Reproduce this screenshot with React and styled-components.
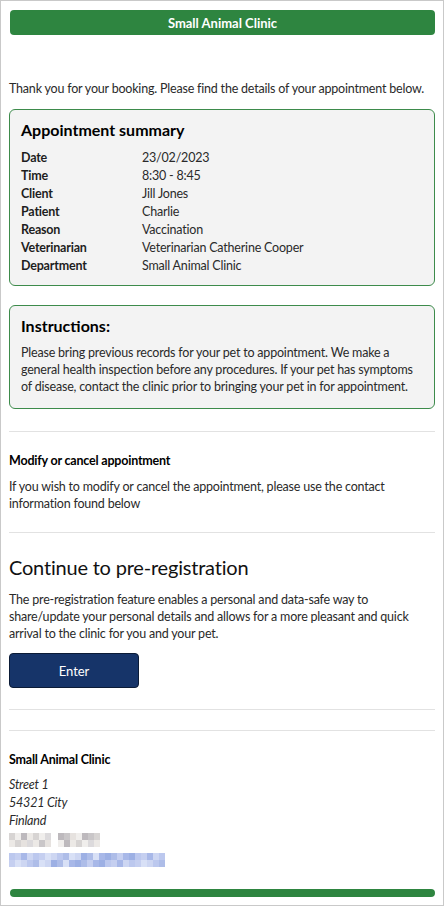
import React from "react";
import styled, { createGlobalStyle } from "styled-components";

const GlobalStyle = createGlobalStyle`
  html, body {
    margin: 0;
    padding: 0;
    background: #fff;
  }
  body {
    font-family: Lato, "Open Sans", Arial, sans-serif;
    font-size: 12.5px;
    letter-spacing: -0.2px;
    color: #1e1e1e;
  }
  * {
    box-sizing: border-box;
  }
`;

const Frame = styled.div`
  height: 906px;
  border: 1px solid #c9c9c9;
  padding: 9px 8px 8px;
  display: flex;
  flex-direction: column;
  overflow: hidden;
`;

const Header = styled.div`
  flex: none;
  margin: 0 0 0 1px;
  height: 25px;
  border-radius: 4px;
  background: #2e8540;
  color: #fff;
  font-weight: 700;
  font-size: 13px;
  letter-spacing: 0;
  display: flex;
  align-items: center;
  justify-content: center;
`;

const Intro = styled.p`
  margin: 45px 0 11px;
  line-height: 18px;
  white-space: nowrap;
  color: #2a2a2a;
`;

const Card = styled.section`
  flex: none;
  background: #f3f3f3;
  border: 1px solid #3d8b4b;
  border-radius: 6px;
  padding: 10px 11px ${(p) => p.$pb || 11}px;
  margin-bottom: ${(p) => p.$gap || 0}px;
`;

const CardTitle = styled.h2`
  margin: 0 0 ${(p) => p.$gap || 0}px;
  font-size: 16px;
  line-height: 20px;
  font-weight: 700;
  letter-spacing: 0;
  color: #000;
`;

const SummaryGrid = styled.dl`
  margin: 0;
  display: grid;
  grid-template-columns: 121px 1fr;
  grid-auto-rows: 18px;
  align-items: center;
`;

const Term = styled.dt`
  font-weight: 700;
  color: #1e1e1e;
`;

const Value = styled.dd`
  margin: 0;
  color: #2a2a2a;
`;

const Paragraph = styled.p`
  margin: 0;
  line-height: 17px;
  color: #2a2a2a;
`;

const Divider = styled.hr`
  flex: none;
  border: none;
  border-top: 1px solid #e2e2e2;
  margin: ${(p) => p.$top || 0}px 0 ${(p) => p.$bottom || 0}px;
`;

const SectionTitle = styled.h3`
  margin: 0 0 ${(p) => p.$gap || 0}px;
  font-size: 12.5px;
  line-height: 18px;
  font-weight: 700;
  color: #000;
`;

const BigTitle = styled.h2`
  margin: 0 0 11px;
  font-size: 20px;
  line-height: 26px;
  font-weight: 400;
  letter-spacing: -0.2px;
  color: #111;
`;

const EnterButton = styled.button`
  flex: none;
  margin-top: 11px;
  width: 130px;
  height: 35px;
  border: 1px solid #0b1b36;
  border-radius: 4px;
  background: #163469;
  color: #fff;
  font-family: inherit;
  font-size: 13px;
  cursor: pointer;
`;

const Address = styled.address`
  margin-top: 7px;
  font-style: italic;
  line-height: 18px;
  color: #2a2a2a;
`;

const MosaicRow = styled.div`
  display: flex;
  gap: 7px;
  margin-top: ${(p) => p.$top || 0}px;
`;

const Mosaic = styled.div`
  display: grid;
  grid-template-columns: repeat(${(p) => p.$cols}, 6px);
  grid-auto-rows: 7px;
`;

const Cell = styled.span`
  display: block;
`;

const Spacer = styled.div`
  flex: 1;
`;

const FooterBar = styled.div`
  flex: none;
  margin: 0 0 0 1px;
  height: 8px;
  border-radius: 4px;
  background: #2e8540;
`;

const summary = [
  ["Date", "23/02/2023"],
  ["Time", "8:30 - 8:45"],
  ["Client", "Jill Jones"],
  ["Patient", "Charlie"],
  ["Reason", "Vaccination"],
  ["Veterinarian", "Veterinarian Catherine Cooper"],
  ["Department", "Small Animal Clinic"],
];

const grays = ["#e6e2df", "#d7d4d3", "#c9c6c8", "#ece9e6", "#bdb9bd", "#dcdadc", "#f0eeec"];
const blues = ["#c5cff0", "#aebde8", "#bcc8ee", "#9db0e4", "#cdd6f2", "#a8b8e8", "#d8e0f6"];

const cells = (n, palette, seed) =>
  Array.from({ length: n }, (_, i) => palette[(i * 5 + seed + Math.floor(i / 3)) % palette.length]);

const MosaicBlock = ({ cols, palette, seed }) => (
  <Mosaic $cols={cols}>
    {cells(cols * 2, palette, seed).map((c, i) => (
      <Cell key={i} style={{ background: c }} />
    ))}
  </Mosaic>
);

const App = () => {
  return (
    <>
      <GlobalStyle />
      <Frame>
        <Header>Small Animal Clinic</Header>
        <Intro>Thank you for your booking. Please find the details of your appointment below.</Intro>

        <Card $gap={19}>
          <CardTitle $gap={8}>Appointment summary</CardTitle>
          <SummaryGrid>
            {summary.map(([k, v]) => (
              <React.Fragment key={k}>
                <Term>{k}</Term>
                <Value>{v}</Value>
              </React.Fragment>
            ))}
          </SummaryGrid>
        </Card>

        <Card $pb={13}>
          <CardTitle $gap={8}>Instructions:</CardTitle>
          <Paragraph>
            Please bring previous records for your pet to appointment. We make a general health
            inspection before any procedures. If your pet has symptoms of disease, contact the clinic
            prior to bringing your pet in for appointment.
          </Paragraph>
        </Card>

        <Divider $top={22} $bottom={20} />

        <SectionTitle $gap={8}>Modify or cancel appointment</SectionTitle>
        <Paragraph>
          If you wish to modify or cancel the appointment, please use the contact information found
          below
        </Paragraph>

        <Divider $top={20} $bottom={21} />

        <BigTitle>Continue to pre-registration</BigTitle>
        <Paragraph>
          The pre-registration feature enables a personal and data-safe way to share/update your
          personal details and allows for a more pleasant and quick arrival to the clinic for you and
          your pet.
        </Paragraph>
        <EnterButton>Enter</EnterButton>

        <Divider $top={21} $bottom={20} />
        <Divider $top={0} $bottom={20} />

        <SectionTitle>Small Animal Clinic</SectionTitle>
        <Address>
          Street 1
          <br />
          54321 City
          <br />
          Finland
        </Address>
        <MosaicRow $top={3}>
          <MosaicBlock cols={7} palette={grays} seed={1} />
          <MosaicBlock cols={7} palette={grays} seed={4} />
        </MosaicRow>
        <MosaicRow $top={6}>
          <MosaicBlock cols={26} palette={blues} seed={2} />
        </MosaicRow>

        <Spacer />
        <FooterBar />
      </Frame>
    </>
  );
};

export default App;
